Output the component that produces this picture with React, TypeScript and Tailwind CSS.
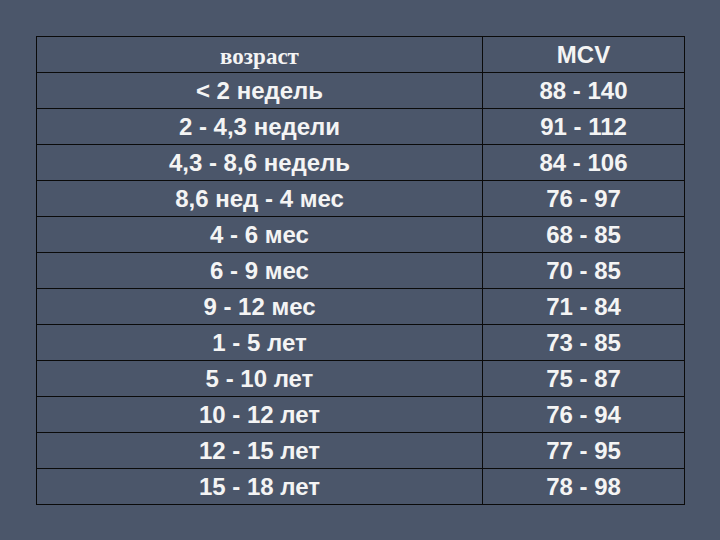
const rows: [string, string][] = [
  ['< 2 недель', '88 - 140'],
  ['2 - 4,3 недели', '91 - 112'],
  ['4,3 - 8,6 недель', '84 - 106'],
  ['8,6 нед - 4 мес', '76 - 97'],
  ['4 - 6 мес', '68 - 85'],
  ['6 - 9 мес', '70 - 85'],
  ['9 - 12 мес', '71 - 84'],
  ['1 - 5 лет', '73 - 85'],
  ['5 - 10 лет', '75 - 87'],
  ['10 - 12 лет', '76 - 94'],
  ['12 - 15 лет', '77 - 95'],
  ['15 - 18 лет', '78 - 98'],
];

export default function App() {
  return (
    <div className="w-[720px] h-[540px] bg-[#4b566a] pt-[36px] pl-[36px]">
      <table className="w-[649px] border-collapse text-[#f4f4f4] font-bold text-[24px] font-['Liberation_Sans',Arial,sans-serif]">
        <thead>
          <tr className="h-[36px]">
            <th className="w-[446px] border-[1.5px] border-[#0a0a0a] font-['Liberation_Serif',serif] text-[23px] pt-[4px] leading-none">
              возраст
            </th>
            <th className="border-[1.5px] border-[#0a0a0a] leading-none">MCV</th>
          </tr>
        </thead>
        <tbody>
          {rows.map(([age, mcv]) => (
            <tr key={age} className="h-[36px]">
              <td className="border-[1.5px] border-[#0a0a0a] text-center leading-none">{age}</td>
              <td className="border-[1.5px] border-[#0a0a0a] text-center leading-none">{mcv}</td>
            </tr>
          ))}
        </tbody>
      </table>
    </div>
  );
}
